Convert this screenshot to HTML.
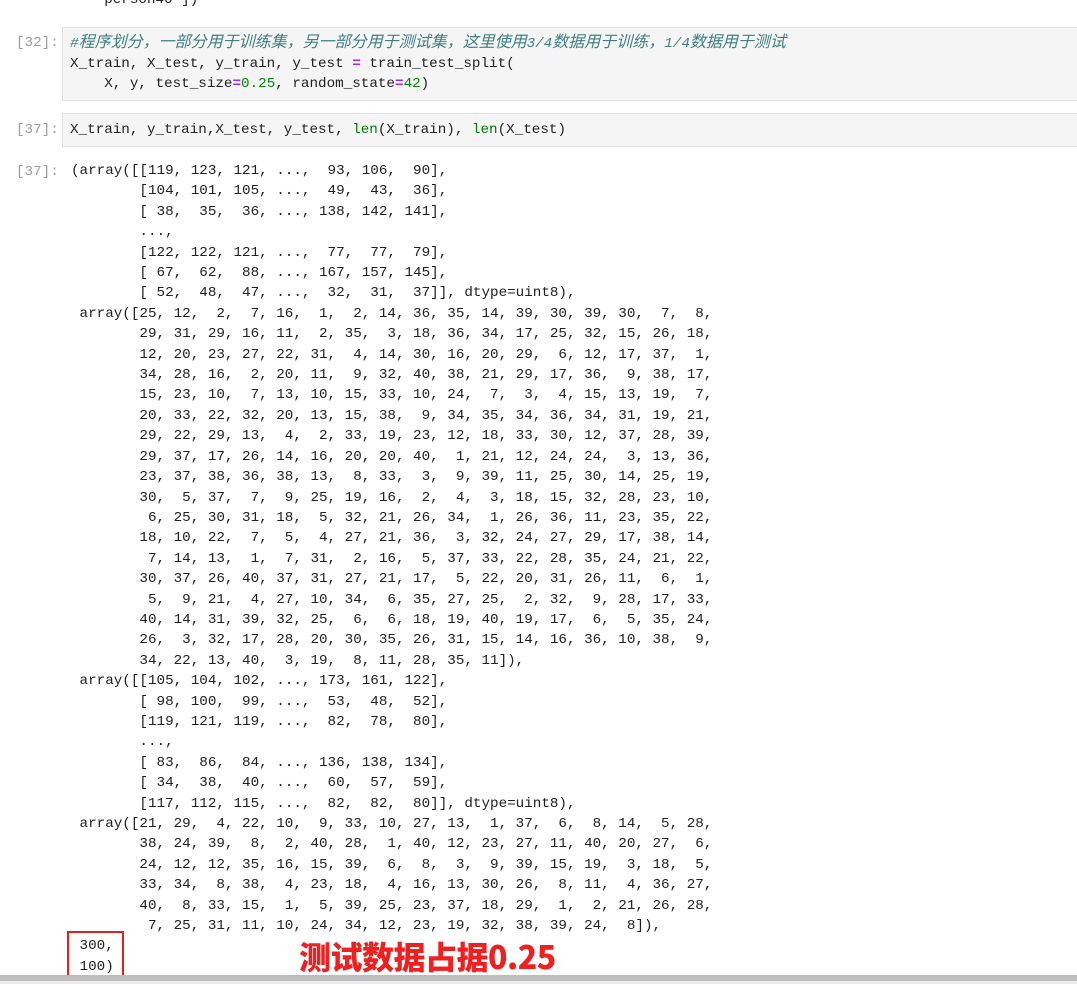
<!DOCTYPE html>
<html><head><meta charset="utf-8"><style>
body{margin:0;width:1077px;height:984px;overflow:hidden;background:#fff;position:relative;font-family:"Liberation Mono","Noto Sans CJK SC",monospace;}
pre{margin:0;font-family:"Liberation Mono","Noto Sans CJK SC",monospace;font-size:14.25px;line-height:20.3px;color:#212121;position:absolute;}
.p{position:absolute;left:16px;color:#9e9e9e;font-size:14.25px;font-family:"Liberation Mono",monospace;line-height:20px;}
.cell{position:absolute;left:62px;right:-2px;background:#f5f5f5;border:1px solid #e0e0e0;}
.c{color:#408080;font-style:italic;}
.z{font-size:16px;}
.k{color:#aa22ff;font-weight:bold;}
.n{color:#008800;}
.b{color:#008000;}
</style></head><body>
<pre style="left:70px;top:-10px;line-height:20px">   'person40'])</pre>

<div class="p" style="top:33px">[32]:</div>
<div class="cell" style="top:27px;height:72px"></div>
<pre style="left:70px;top:33px;line-height:20px"><span class="c">#<span class="z">程序划分，一部分用于训练集，另一部分用于测试集，这里使用</span>3/4<span class="z">数据用于训练，</span>1/4<span class="z">数据用于测试</span></span>
X_train, X_test, y_train, y_test <span class="k">=</span> train_test_split(
    X, y, test_size<span class="k">=</span><span class="n">0.25</span>, random_state<span class="k">=</span><span class="n">42</span>)</pre>

<div class="p" style="top:120px">[37]:</div>
<div class="cell" style="top:113px;height:32px"></div>
<pre style="left:70px;top:120px;line-height:20px">X_train, y_train,X_test, y_test, <span class="b">len</span>(X_train), <span class="b">len</span>(X_test)</pre>

<div class="p" style="top:162px">[37]:</div>
<pre style="left:71px;top:161px;line-height:20.4px">(array([[119, 123, 121, ...,  93, 106,  90],
        [104, 101, 105, ...,  49,  43,  36],
        [ 38,  35,  36, ..., 138, 142, 141],
        ...,
        [122, 122, 121, ...,  77,  77,  79],
        [ 67,  62,  88, ..., 167, 157, 145],
        [ 52,  48,  47, ...,  32,  31,  37]], dtype=uint8),
 array([25, 12,  2,  7, 16,  1,  2, 14, 36, 35, 14, 39, 30, 39, 30,  7,  8,
        29, 31, 29, 16, 11,  2, 35,  3, 18, 36, 34, 17, 25, 32, 15, 26, 18,
        12, 20, 23, 27, 22, 31,  4, 14, 30, 16, 20, 29,  6, 12, 17, 37,  1,
        34, 28, 16,  2, 20, 11,  9, 32, 40, 38, 21, 29, 17, 36,  9, 38, 17,
        15, 23, 10,  7, 13, 10, 15, 33, 10, 24,  7,  3,  4, 15, 13, 19,  7,
        20, 33, 22, 32, 20, 13, 15, 38,  9, 34, 35, 34, 36, 34, 31, 19, 21,
        29, 22, 29, 13,  4,  2, 33, 19, 23, 12, 18, 33, 30, 12, 37, 28, 39,
        29, 37, 17, 26, 14, 16, 20, 20, 40,  1, 21, 12, 24, 24,  3, 13, 36,
        23, 37, 38, 36, 38, 13,  8, 33,  3,  9, 39, 11, 25, 30, 14, 25, 19,
        30,  5, 37,  7,  9, 25, 19, 16,  2,  4,  3, 18, 15, 32, 28, 23, 10,
         6, 25, 30, 31, 18,  5, 32, 21, 26, 34,  1, 26, 36, 11, 23, 35, 22,
        18, 10, 22,  7,  5,  4, 27, 21, 36,  3, 32, 24, 27, 29, 17, 38, 14,
         7, 14, 13,  1,  7, 31,  2, 16,  5, 37, 33, 22, 28, 35, 24, 21, 22,
        30, 37, 26, 40, 37, 31, 27, 21, 17,  5, 22, 20, 31, 26, 11,  6,  1,
         5,  9, 21,  4, 27, 10, 34,  6, 35, 27, 25,  2, 32,  9, 28, 17, 33,
        40, 14, 31, 39, 32, 25,  6,  6, 18, 19, 40, 19, 17,  6,  5, 35, 24,
        26,  3, 32, 17, 28, 20, 30, 35, 26, 31, 15, 14, 16, 36, 10, 38,  9,
        34, 22, 13, 40,  3, 19,  8, 11, 28, 35, 11]),
 array([[105, 104, 102, ..., 173, 161, 122],
        [ 98, 100,  99, ...,  53,  48,  52],
        [119, 121, 119, ...,  82,  78,  80],
        ...,
        [ 83,  86,  84, ..., 136, 138, 134],
        [ 34,  38,  40, ...,  60,  57,  59],
        [117, 112, 115, ...,  82,  82,  80]], dtype=uint8),
 array([21, 29,  4, 22, 10,  9, 33, 10, 27, 13,  1, 37,  6,  8, 14,  5, 28,
        38, 24, 39,  8,  2, 40, 28,  1, 40, 12, 23, 27, 11, 40, 20, 27,  6,
        24, 12, 12, 35, 16, 15, 39,  6,  8,  3,  9, 39, 15, 19,  3, 18,  5,
        33, 34,  8, 38,  4, 23, 18,  4, 16, 13, 30, 26,  8, 11,  4, 36, 27,
        40,  8, 33, 15,  1,  5, 39, 25, 23, 37, 18, 29,  1,  2, 21, 26, 28,
         7, 25, 31, 11, 10, 24, 34, 12, 23, 19, 32, 38, 39, 24,  8]),
 300,
 100)</pre>
<div style="position:absolute;left:67px;top:931px;width:57px;height:50px;border:2px solid #e02020;box-sizing:border-box"></div>
<div style="position:absolute;left:299px;top:934px;font-family:'Noto Sans CJK SC',sans-serif;font-weight:900;font-size:32px;color:#ee2020;line-height:44px;letter-spacing:-0.5px">测试数据占据0.25</div>
<div style="position:absolute;left:0;top:975px;width:1077px;height:6px;background:#bdbdbd"></div>
<div style="position:absolute;left:0;top:981px;width:1077px;height:3px;background:#ececec"></div>
</body></html>
